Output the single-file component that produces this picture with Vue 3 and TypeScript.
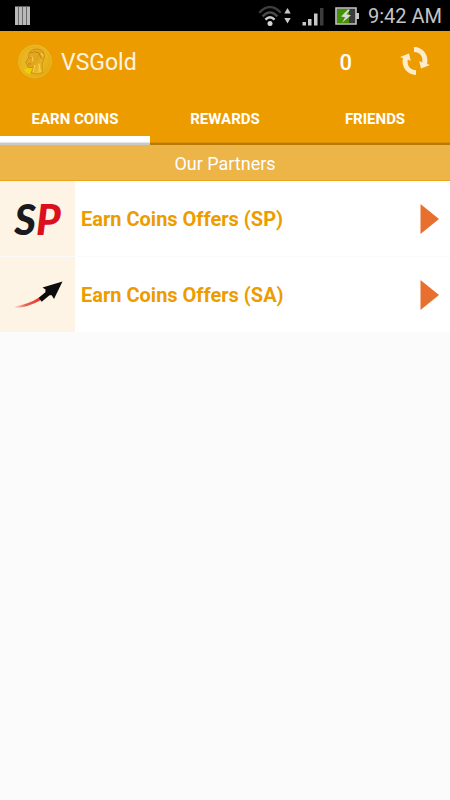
<script setup lang="ts">
import { ref } from 'vue'

interface Offer {
  id: 'sp' | 'sa'
  title: string
}

const tabs: string[] = ['EARN COINS', 'REWARDS', 'FRIENDS']
const activeTab = ref(0)
const coins = ref(0)

const offers: Offer[] = [
  { id: 'sp', title: 'Earn Coins Offers (SP)' },
  { id: 'sa', title: 'Earn Coins Offers (SA)' },
]
</script>

<template>
  <div class="app">
    <div class="status-bar">
      <svg class="bars" width="16" height="20" viewBox="0 0 16 20" aria-hidden="true">
        <path d="M0 .5h15v18.500H0z" fill="#b9b9b9" />
        <path d="M3.500 .5v18.500M7.500 .5v18.500M11.500 .5v18.500" stroke="#6a6a6a" />
      </svg>
      <svg class="wifi" width="34" height="22" viewBox="0 0 34 22" aria-hidden="true">
        <g fill="none" stroke-width="2.400">
          <path d="M1.200 7.800Q12-3.800 22.800 7.800" stroke="#3e3e3e" />
          <path d="M4.600 11.300Q12 3.500 19.400 11.300" stroke="#4c4c4c" />
          <path d="M7.400 14.600Q12 10 16.600 14.600" stroke="#cfcfcf" />
        </g>
        <circle cx="12" cy="18.500" r="2.500" fill="#d6d6d6" />
        <path d="M26.300 8.500l3.200-5.500L32.700 8.500zM26.300 13h6.400l-3.200 5.500z" fill="#c8c8c8" />
      </svg>
      <svg class="signal" width="22" height="20" viewBox="0 0 22 20" aria-hidden="true">
        <path d="M.5 16h3.500v3.500H.5zM6 13h3.500v6.500H6zM12 7.500h3.500v12H12z" fill="#c8c8c8" />
        <path d="M18 2h3.500v17.500H18z" fill="#3c3c3c" />
      </svg>
      <svg class="battery" width="25" height="18" viewBox="0 0 25 18" aria-hidden="true">
        <path d="M1 1h20v16H1z" fill="#3b3b3b" stroke="#c4c4c4" stroke-width="1.600" />
        <path d="M2 2h12v14H2z" fill="#439204" />
        <path d="M21 6h3v6h-3z" fill="#c4c4c4" />
        <path d="M13 2.500L6 9.500l4.200.8-3.200 5.400 9-7.500-4.600-1 3.600-4.500z" fill="#d9d9d9" />
      </svg>
      <time class="clock">9:42 AM</time>
    </div>

    <header class="header">
      <svg class="coin" width="36" height="38" viewBox="0 0 36 38" aria-hidden="true">
        <defs>
          <linearGradient id="coin-face" x1="0" y1="0" x2="1" y2="1">
            <stop offset="0" stop-color="#e9b21f" />
            <stop offset=".5" stop-color="#ecb822" />
            <stop offset="1" stop-color="#e2a80d" />
          </linearGradient>
          <linearGradient id="coin-head" x1="0" y1="0" x2="1" y2="1">
            <stop offset="0" stop-color="#e8b02c" />
            <stop offset=".5" stop-color="#e0a31c" />
            <stop offset="1" stop-color="#f7d13c" />
          </linearGradient>
        </defs>
        <circle cx="18" cy="18" r="17" fill="#dd9c08" />
        <circle cx="18" cy="17.500" r="16.500" fill="url(#coin-face)" stroke="#efbd2f" stroke-width=".6" />
        <circle cx="18" cy="17.500" r="14.800" fill="none" stroke="#dfaa18" stroke-width=".6" />
        <path d="M7 26q4-3 8-2.500l-1 5-2 1.500q-3-1-5-4z" fill="#efd000" />
        <path
          d="M12 9q3-4.500 9-4 6 .5 6.500 7 0 3-1.500 5l-1 2v6l.5 3.500q-5 3-11.500.5l3-6q-4 1.500-6.500 0l-.5-3-1.500-1.500L11.500 14z"
          fill="url(#coin-head)" stroke="#bd820e" stroke-width=".7" stroke-linejoin="round"
        />
        <path d="M13 9q5-2.500 9 0l1.500 4 2 2M12.500 14l3 .3M11 20h3" fill="none" stroke="#bd820e" stroke-width=".9" />
        <path d="M15 12.500l1 5M24 9l2 3M18 21l-2 7M22 20l1 8" fill="none" stroke="#f6d44c" stroke-width="1.100" />
      </svg>
      <h1 class="title">VSGold</h1>
      <output class="balance" aria-label="Coins">{{ coins }}</output>
      <button class="refresh" type="button" aria-label="Refresh">
        <svg width="30" height="32" viewBox="0 1 30 32" aria-hidden="true">
          <g fill="#fdeccb">
            <path d="M14 1C23 1 29 9.200 27.100 17.900L30 19 21 22.500 19.200 15 22.200 16.600C23.300 10.800 20 6 14 6z" />
            <path d="M14 1C23 1 29 9.200 27.100 17.900L30 19 21 22.500 19.200 15 22.200 16.600C23.300 10.800 20 6 14 6z" transform="rotate(180 15 15)" />
          </g>
        </svg>
      </button>
    </header>

    <nav class="tabs" role="tablist">
      <button
        v-for="(tab, index) in tabs"
        :key="tab"
        type="button"
        role="tab"
        class="tab"
        :class="{ active: activeTab === index }"
        :aria-selected="activeTab === index"
        @click="activeTab = index"
      >
        {{ tab }}
      </button>
    </nav>

    <main>
      <h2 class="section">Our Partners</h2>
      <ul class="offers">
        <li v-for="offer in offers" :key="offer.id" class="offer">
          <button class="offer-button" type="button">
            <span class="thumb" aria-hidden="true">
              <span v-if="offer.id === 'sp'" class="sp-logo">S<span class="sp-red">P</span></span>
              <svg v-else width="75" height="75" viewBox="0 0 75 75">
                <defs>
                  <linearGradient id="trail" x1="0" x2="1">
                    <stop offset="0" stop-color="#e83b30" stop-opacity=".1" />
                    <stop offset=".4" stop-color="#e83b30" stop-opacity=".8" />
                    <stop offset="1" stop-color="#e5332b" />
                  </linearGradient>
                </defs>
                <path d="M15 49.500Q29 47 39 40.500l2 2.500Q28 50.500 15 51z" fill="url(#trail)" />
                <path d="M62.500 24.500L54 42l-2.300-3.700-2.200-.1-7.800 6.500-3-3.900 6.700-5.600.1-2.700L42.500 30.500z" fill="#0c0c0c" />
              </svg>
            </span>
            <span class="offer-title">{{ offer.title }}</span>
            <svg class="arrow" width="20" height="30" viewBox="0 0 20 30" aria-hidden="true">
              <path d="M.5 0L19 15 .5 30z" fill="#e8702e" />
            </svg>
          </button>
        </li>
      </ul>
    </main>
  </div>
</template>

<style>
body {
  margin: 0;
  background: #fbfbfb;
}
</style>

<style scoped>
.app {
  min-height: 100vh;
  font-family: Roboto, sans-serif;
  background: #fbfbfb;
}

button {
  border: 0;
  padding: 0;
  background: none;
  font-family: inherit;
  cursor: pointer;
}

svg {
  display: block;
  flex: none;
}

.status-bar {
  display: flex;
  align-items: center;
  height: 31px;
  padding: 0 8px 0 15px;
  background: #000;
  color: #c4c4c4;
}

.bars {
  margin-right: auto;
}

.wifi {
  margin-right: 10px;
}

.signal {
  margin-right: 11px;
}

.battery {
  margin-right: 8px;
}

.clock {
  font-size: 20px;
  line-height: 30px;
}

.header {
  display: flex;
  align-items: center;
  height: 64px;
  padding: 0 20px 0 17px;
  background: #ed9c00;
  color: #fdf3e1;
}

.title {
  flex: 1;
  margin: 0 0 0 8px;
  font-size: 23px;
  line-height: 28px;
  font-weight: 400;
}

.balance {
  margin-right: 48px;
  color: #fff;
  font-size: 22px;
  line-height: 28px;
  font-weight: 500;
}

.tabs {
  display: grid;
  grid-template-columns: repeat(3, 1fr);
  background: #ed9c00;
}

.tab {
  height: 50px;
  border-bottom: 2px solid #b97a05;
  box-shadow: inset 0 -1px #d98f00;
  color: #fff;
  font-size: 15px;
  line-height: 20px;
  font-weight: 700;
}

.tab.active {
  border-bottom-color: #c9c9c9;
  box-shadow: inset 0 -1px #e4e4e4, inset 0 -7px #fff;
}

.section {
  margin: 0;
  padding-top: 2px;
  border-bottom: 1px solid #eba51c;
  background: #edb448;
  color: #fff;
  font-size: 18px;
  line-height: 33px;
  font-weight: 400;
  text-align: center;
}

.offers {
  margin: 0;
  padding: 0;
  list-style: none;
}

.offer + .offer {
  border-top: 1px solid #fafafa;
}

.offer-button {
  display: flex;
  align-items: center;
  width: 100%;
  height: 75px;
  padding-right: 10px;
  background: #fff;
  text-align: left;
}

.thumb {
  display: grid;
  place-items: center;
  width: 75px;
  height: 75px;
  background: #fdf4e5;
}

.sp-logo {
  color: #191a1e;
  font-family: Lato, sans-serif;
  font-size: 42px;
  line-height: 48px;
  font-style: italic;
  font-weight: 900;
}

.sp-red {
  color: #da101e;
}

.offer-title {
  flex: 1;
  padding-left: 6px;
  color: #ed9c00;
  font-size: 20px;
  line-height: 28px;
  font-weight: 700;
}
</style>
